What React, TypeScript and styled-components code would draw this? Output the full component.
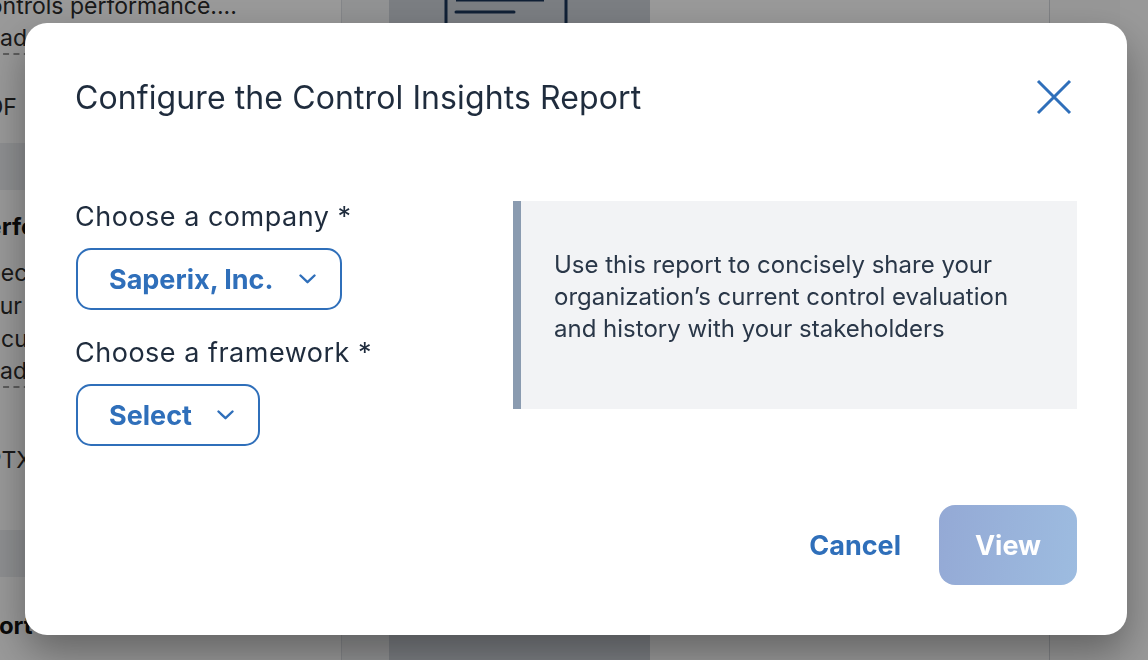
import React from 'react';
import styled, { createGlobalStyle } from 'styled-components';

const GlobalStyle = createGlobalStyle`
    html, body {
        margin: 0;
        padding: 0;
        width: 1148px;
        height: 660px;
        overflow: hidden;
        font-family: Inter, "Noto Sans", "Liberation Sans", sans-serif;
    }
`;

const BLUE = '#2f6fba';
const INK = '#1f2c3d';

/* ---------- page behind the dialog ---------- */

const Page = styled.div`
    width: 1148px;
    height: 660px;
    background: #eceef1;
    display: grid;
    grid-template-columns: 370px 47px 261px 400px 98px;
    margin-left: -28px;
    overflow: hidden;
`;

const CardColumn = styled.div`
    display: flex;
    flex-direction: column;
    gap: 47px;
    margin-top: -22px;
`;

const Card = styled.div<{ $h: number }>`
    height: ${p => p.$h}px;
    background: #ffffff;
    border-right: 1px solid #dcdfe4;
    padding: 12px 0 0 0;
    box-sizing: border-box;
    display: flex;
    flex-direction: column;
    font-size: 23px;
    color: #2b2b2b;
    line-height: 33px;
`;

const CardTitle = styled.div<{ $shift?: number }>`
    font-weight: 700;
    font-size: 24px;
    color: #111;
    margin-bottom: 14px;
    margin-left: ${p => p.$shift ?? 0}px;
`;

const CardLink = styled.div`
    border-bottom: 2px dashed #9a9a9a;
    width: 120px;
    line-height: 30px;
    margin-bottom: 36px;
`;

const Gutter = styled.div`
    background: #f2f3f5;
`;

const Preview = styled.div`
    background: #cdd2d9;
    display: flex;
    justify-content: center;
`;

const DocIcon = styled.svg`
    margin-top: -40px;
    margin-left: -28px;
`;

const RightCard = styled.div`
    background: #ffffff;
    border-right: 1px solid #d4d7dc;
    display: flex;
    flex-direction: column;
    justify-content: flex-end;
    padding: 0 0 10px 200px;
    font-weight: 700;
    font-size: 24px;
    color: #111;
`;

const FarRight = styled.div`
    background: #fbfbfb;
`;

/* ---------- dialog ---------- */

const Overlay = styled.div`
    position: fixed;
    inset: 0;
    background: rgba(0, 0, 0, 0.4);
    display: flex;
    align-items: flex-start;
    padding: 23px 0 0 25px;
`;

const Dialog = styled.div`
    width: 1102px;
    box-sizing: border-box;
    background: #ffffff;
    border-radius: 22px;
    padding: 50px 50px 50px 51px;
    box-shadow: 0 18px 40px rgba(0, 0, 0, 0.35);
    display: flex;
    flex-direction: column;
`;

const Header = styled.div`
    height: 48px;
    display: flex;
    align-items: center;
    justify-content: space-between;
`;

const Title = styled.h2`
    margin: 0;
    margin-left: -1px;
    font-size: 32px;
    font-weight: 400;
    color: ${INK};
    letter-spacing: 0.1px;
`;

const CloseButton = styled.button`
    border: none;
    background: none;
    padding: 0;
    width: 36px;
    height: 36px;
    margin-right: 5px;
    display: flex;
    align-items: center;
    justify-content: center;
    cursor: pointer;
`;

const Body = styled.div`
    margin-top: 80px;
    display: grid;
    grid-template-columns: 437px 564px;
    align-items: start;
`;

const Fields = styled.div`
    display: flex;
    flex-direction: column;
`;

const Label = styled.label`
    font-size: 27px;
    line-height: 32px;
    color: ${INK};
    margin-bottom: 15px;
    margin-left: -1px;
    letter-spacing: 0.5px;
`;

const SelectButton = styled.button`
    align-self: flex-start;
    height: 62px;
    box-sizing: border-box;
    border: 2px solid ${BLUE};
    border-radius: 15px;
    background: #ffffff;
    padding: 0 24px 0 31px;
    display: flex;
    align-items: center;
    gap: 25px;
    font-family: inherit;
    font-size: 27px;
    font-weight: 700;
    color: ${BLUE};
    margin-bottom: 27px;
    &:last-child {
        margin-bottom: 0;
    }
`;

const InfoPanel = styled.div`
    background: #f2f3f5;
    border-left: 8px solid #8a9bb0;
    padding: 48px 30px 64px 33px;
    font-size: 24px;
    line-height: 32px;
    color: #2a3748;
`;

const Footer = styled.div`
    margin-top: 59px;
    display: flex;
    justify-content: flex-end;
    align-items: center;
    gap: 38px;
`;

const TextButton = styled.button`
    border: none;
    background: none;
    padding: 0;
    font-family: inherit;
    font-size: 27px;
    font-weight: 700;
    color: ${BLUE};
    cursor: pointer;
`;

const PrimaryButton = styled.button<{ $disabled?: boolean }>`
    width: 138px;
    height: 80px;
    border: none;
    border-radius: 16px;
    background: linear-gradient(100deg, #94a9d5 0%, #9dbce0 100%);
    color: #ffffff;
    font-family: inherit;
    font-size: 27px;
    font-weight: 700;
    cursor: ${p => (p.$disabled ? 'default' : 'pointer')};
`;

const Chevron = () => (
    <svg width="17" height="10" viewBox="0 0 17 10" fill="none">
        <path d="M1.5 1.5 L8.5 8.2 L15.5 1.5" stroke={BLUE} strokeWidth="2.4" strokeLinecap="round" strokeLinejoin="round" />
    </svg>
);

const App = () => {
    return (
        <>
            <GlobalStyle />
            <Page>
                <CardColumn>
                    <Card $h={165}>
                        <div>Controls performance....</div>
                        <CardLink>Read more</CardLink>
                        <div>PDF</div>
                    </Card>
                    <Card $h={340}>
                        <div style={{ height: 8 }} />
                        <CardTitle>Performance</CardTitle>
                        <div>Spec</div>
                        <div>Your</div>
                        <div>Accu</div>
                        <CardLink>Read more</CardLink>
                        <div style={{ marginTop: 20 }}>PPTX</div>
                    </Card>
                    <Card $h={140}>
                        <div style={{ height: 20 }} />
                        <CardTitle $shift={-18}>Report</CardTitle>
                    </Card>
                </CardColumn>
                <Gutter />
                <Preview>
                    <DocIcon width="124" height="100" viewBox="0 0 124 100" fill="none">
                        <rect x="2" y="2" width="120" height="96" stroke="#1a3559" strokeWidth="3" />
                        <line x1="12" y1="40" x2="100" y2="40" stroke="#1a3559" strokeWidth="3" />
                        <line x1="12" y1="52" x2="70" y2="52" stroke="#1a3559" strokeWidth="3" strokeLinecap="round" />
                    </DocIcon>
                </Preview>
                <RightCard>
                    <div>Summary</div>
                </RightCard>
                <FarRight />
            </Page>

            <Overlay>
                <Dialog role="dialog" aria-label="Configure the Control Insights Report">
                    <Header>
                        <Title>Configure the Control Insights Report</Title>
                        <CloseButton aria-label="Close">
                            <svg width="36" height="36" viewBox="0 0 36 36" fill="none">
                                <path d="M2 2 L34 34 M34 2 L2 34" stroke={BLUE} strokeWidth="3" />
                            </svg>
                        </CloseButton>
                    </Header>

                    <Body>
                        <Fields>
                            <Label>Choose a company *</Label>
                            <SelectButton>
                                Saperix, Inc.
                                <Chevron />
                            </SelectButton>
                            <Label>Choose a framework *</Label>
                            <SelectButton>
                                Select
                                <Chevron />
                            </SelectButton>
                        </Fields>
                        <InfoPanel>
                            Use this report to concisely share your<br />
                            organization’s current control evaluation<br />
                            and history with your stakeholders
                        </InfoPanel>
                    </Body>

                    <Footer>
                        <TextButton>Cancel</TextButton>
                        <PrimaryButton $disabled>View</PrimaryButton>
                    </Footer>
                </Dialog>
            </Overlay>
        </>
    );
};

export default App;
